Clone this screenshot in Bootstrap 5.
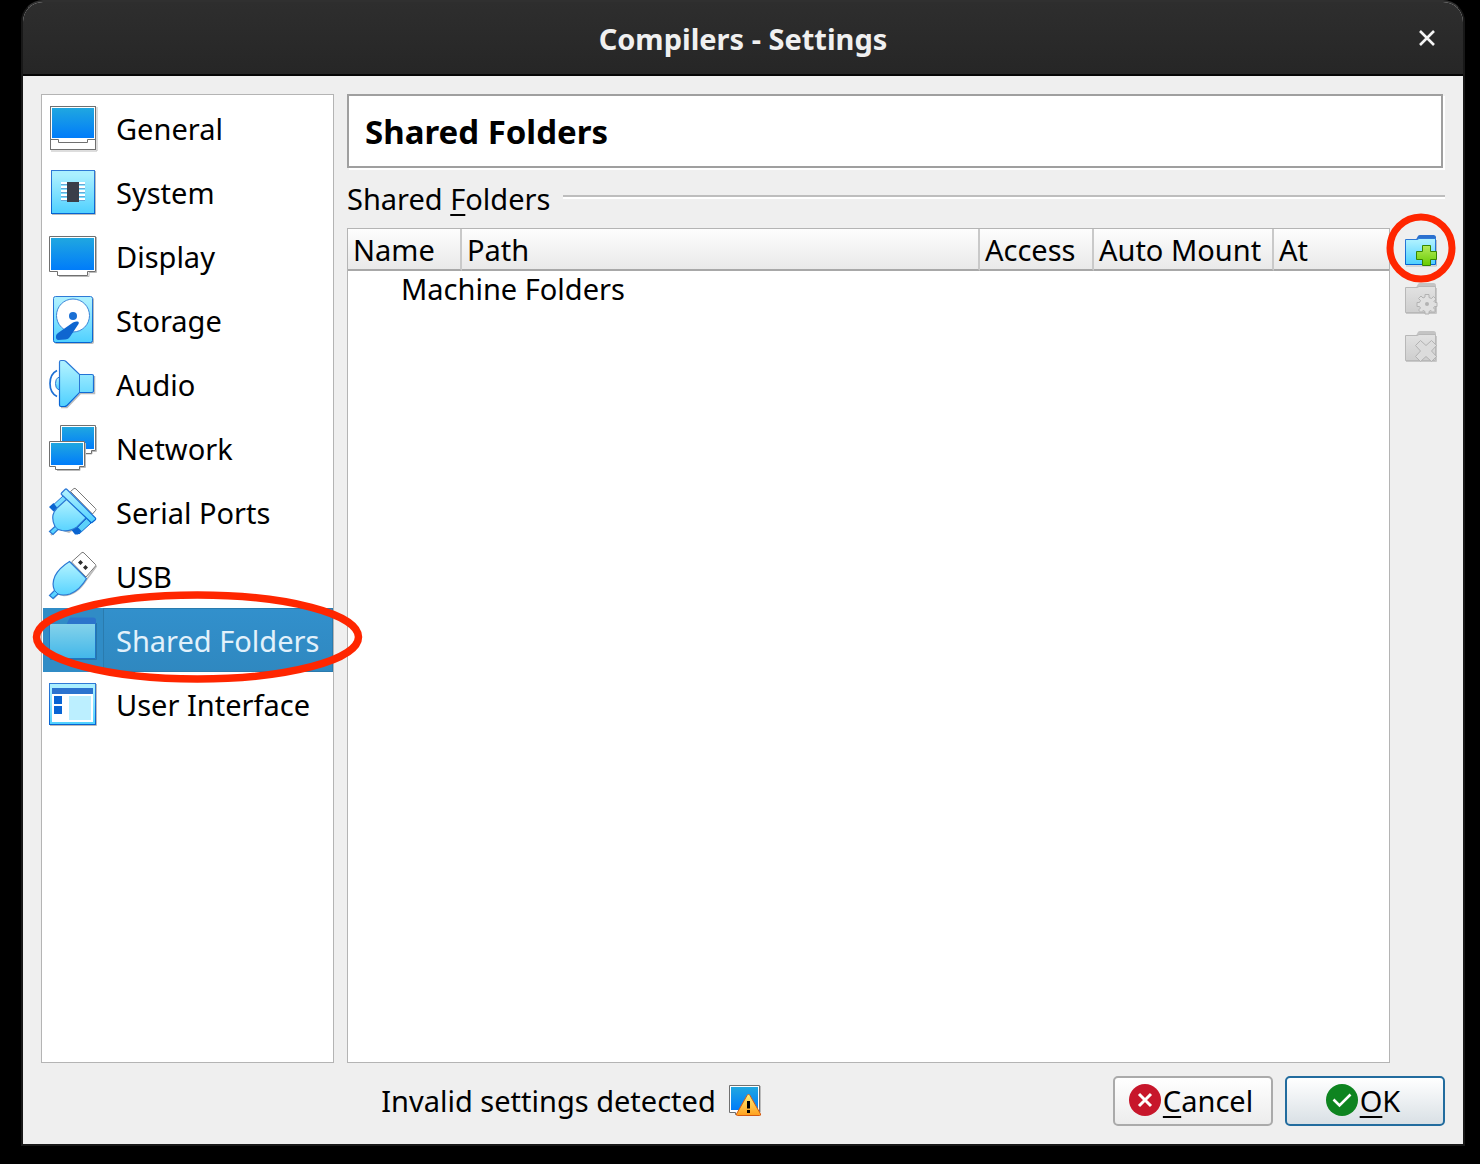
<!DOCTYPE html>
<html lang="en">
<head>
<meta charset="utf-8">
<meta name="viewport" content="width=device-width, initial-scale=1">
<title>Compilers - Settings</title>
<link href="https://cdn.jsdelivr.net/npm/bootstrap@5.3.0/dist/css/bootstrap.min.css" rel="stylesheet">
<style>
  body { background: #000; color: #000; font-family: "Noto Sans", "Open Sans", sans-serif; font-size: 29px; line-height: 38px; }
  .stage { min-height: 100vh; padding: 0 15px 18px 21px; }
  .dialog-window { border: 2px solid #181818; border-top-color: #303030; border-radius: 22px 22px 0 0; background: #efefef; overflow: hidden; }
  .title-bar { height: 74px; background: linear-gradient(#2e2e2e, #262626); border-bottom: 2px solid #050505; color: #f0f0f0; padding: 0 20px; }
  .title-bar h1 { font-size: 29px; line-height: 38px; font-weight: 700; padding-top: 2px; }
  .title-side { width: 32px; height: 32px; }
  .close-btn { background: none; border: 0; padding: 0; }
  .dialog-body { padding: 18px; gap: 13px; }
  .panes { gap: 13px; }
  .category-list { width: 293px; background: #fff; border: 1px solid #b4b4b4; border-radius: 0; padding: 1px 0 0 1px; flex: none; }
  .category { height: 64px; padding: 0 0 0 6px; gap: 6px; color: #000; text-decoration: none; position: relative; }
  .category svg.cat-icon { width: 48px; height: 48px; flex: none; overflow: visible; }
  .category span { flex: 1; height: 64px; line-height: 64px; padding-left: 12px; border: 1px solid transparent; white-space: nowrap; }
  .category.current { background: #308cc6; color: #e2f1fb; z-index: 2; }
  .category.current span { background: linear-gradient(#3290cc, #2f88c0); border-color: #2a7bae; }
  .ring-wide { position: absolute; left: -11px; top: -18px; width: 331px; height: 94px; pointer-events: none; }
  .ring-small { position: absolute; left: -11px; top: -14px; width: 70px; height: 70px; pointer-events: none; z-index: 2; }
  .page-head { height: 74px; margin: 0 2px 2px 0; background: #fff; border: 2px solid #9f9f9f; box-shadow: 2px 2px 0 #fff; padding: 2px 0 0 16px; }
  .page-head h2 { font-size: 33px; line-height: 44px; font-weight: 700; }
  .group-head { height: 58px; gap: 13px; }
  .group-head h3 { font-size: 29px; line-height: 38px; font-weight: 400; }
  .group-rule { height: 4px; background: #bdbdbd; border-bottom: 2px solid #fff; margin-bottom: 4px; }
  .mnemonic { text-decoration: underline; text-decoration-thickness: 2px; text-underline-offset: 4px; text-decoration-skip-ink: none; }
  .folder-pane { gap: 7px; }
  .folder-view { background: #fff; border: 1px solid #b4b4b4; min-width: 0; }
  .folder-table { table-layout: fixed; width: 100%; white-space: nowrap; border-collapse: separate; border-spacing: 0; }
  .folder-table th { height: 42px; padding: 2px 0 0 5px; font-weight: 400; line-height: 38px; background: linear-gradient(#fdfdfd, #e9e9e9); border-bottom: 2px solid #a8a8a8; border-right: 2px solid #c9c9c9; }
  .folder-table th:last-child { border-right: 0; }
  .folder-table td { height: 36px; line-height: 36px; padding: 0 0 0 53px; }
  .col-name, .col-access { width: 114px; }
  .col-auto-mount { width: 180px; }
  .col-at { width: 115px; }
  .tool-strip { flex: none; margin-top: -1px; }
  .tool { width: 48px; height: 48px; padding: 0; border: 0; background: none; position: relative; }
  .tool svg.tool-icon { width: 32px; height: 32px; overflow: visible; }
  .status-line { gap: 13px; }
  .dialog-actions { gap: 12px; margin-left: 12px; }
  .dialog-btn { width: 160px; height: 50px; border: 2px solid #aaa; border-radius: 5px; background: linear-gradient(#fff, #ececec); color: #000; font-size: 29px; line-height: 38px; padding: 0 4px 0 0; gap: 2px; }
  .dialog-btn.default-btn { border-color: #226c9e; background: linear-gradient(#fff, #d9e0e5); }
  .dialog-btn svg { margin-bottom: 2px; }
  svg { display: block; }
</style>
<script src="https://cdn.jsdelivr.net/npm/bootstrap@5.3.0/dist/js/bootstrap.bundle.min.js"></script>
</head>
<body>
<svg width="0" height="0" class="position-absolute" aria-hidden="true">
  <defs>
    <linearGradient id="screen" x1="0" y1="0" x2="0" y2="1"><stop offset="0" stop-color="#20a7e0"/><stop offset="1" stop-color="#007cfa"/></linearGradient>
    <linearGradient id="cyan" x1="0" y1="0" x2="0" y2="1"><stop offset="0.1" stop-color="#abf0ff"/><stop offset="1" stop-color="#4fd0ff"/></linearGradient>
    <linearGradient id="edge" x1="0" y1="0" x2="0" y2="1"><stop offset="0" stop-color="#2f7ad6"/><stop offset="1" stop-color="#0563d2"/></linearGradient>
    <linearGradient id="folderSel" x1="0" y1="0" x2="0" y2="1"><stop offset="0" stop-color="#84d2ea"/><stop offset="1" stop-color="#42b7ea"/></linearGradient>
    <linearGradient id="green" x1="0" y1="0" x2="0" y2="1"><stop offset="0" stop-color="#b4ea5c"/><stop offset="1" stop-color="#67cc00"/></linearGradient>
    <linearGradient id="amber" x1="0" y1="0" x2="0" y2="1"><stop offset="0" stop-color="#fff27c"/><stop offset="1" stop-color="#ff9f1c"/></linearGradient>
    <linearGradient id="grey" x1="0" y1="0" x2="0" y2="1"><stop offset="0" stop-color="#e2e2e2"/><stop offset="1" stop-color="#cecece"/></linearGradient>
  </defs>
</svg>
<div class="stage d-flex">
  <main class="dialog-window d-flex flex-column flex-grow-1">
    <header class="title-bar d-flex align-items-center justify-content-between">
      <div class="title-side"></div>
      <h1 class="m-0">Compilers - Settings</h1>
      <button type="button" class="close-btn title-side" aria-label="Close">
        <svg width="32" height="32" viewBox="0 0 32 32"><path d="M9 9l14 14M23 9L9 23" stroke="#f4f4f4" stroke-width="2.600"/></svg>
      </button>
    </header>

    <div class="dialog-body d-flex flex-column flex-grow-1">
      <div class="panes d-flex flex-grow-1">
        <nav class="category-list d-flex flex-column" aria-label="Settings categories">
          <a href="#" class="category d-flex align-items-center">
            <svg class="cat-icon" viewBox="0 0 48 48"><path d="M2 47H48V3" fill="none" stroke="#bbb"/><rect x="1.500" y="2.500" width="45" height="43" fill="#fff" stroke="#707070"/><rect x="3" y="4" width="42" height="30" fill="url(#screen)"/><path d="M1.500 35.500H9.500V38.500H38.500V35.500H46.500" fill="none" stroke="#707070"/></svg>
            <span>General</span></a>
          <a href="#" class="category d-flex align-items-center">
            <svg class="cat-icon" viewBox="0 0 48 48"><path d="M3 46.500H46.500V3" fill="none" stroke="#bbb"/><rect x="2.500" y="2.500" width="43" height="43" fill="url(#cyan)" stroke="url(#edge)"/><path d="M12 15h24M12 19h24M12 23h24M12 27h24M12 31h24" stroke="#fff" stroke-width="2"/><path d="M12 16.500h24M12 20.500h24M12 24.500h24M12 28.500h24M12 32.500h24" stroke="#65a9d8"/><rect x="18" y="14" width="12" height="20" fill="#3a3e49"/></svg>
            <span>System</span></a>
          <a href="#" class="category d-flex align-items-center">
            <svg class="cat-icon" viewBox="0 0 48 48"><path d="M47.500 5V40.500H40V44.500H10" fill="none" stroke="#bbb"/><path d="M.5 4.500H46.500V39.500H38.500V43.500H8.500V39.500H.5Z" fill="#fff" stroke="#707070"/><rect x="2" y="6" width="43" height="32" fill="url(#screen)"/></svg>
            <span>Display</span></a>
          <a href="#" class="category d-flex align-items-center">
            <svg class="cat-icon" viewBox="0 0 48 48"><rect x="5.500" y="1.500" width="39.500" height="46.500" rx="2" fill="#bbb"/><rect x="4.500" y=".5" width="39" height="46" rx="2" fill="url(#cyan)" stroke="url(#edge)"/><circle cx="24" cy="19.500" r="16.500" fill="#fff" stroke="#3b86d8"/><circle cx="24" cy="20" r="4" fill="#1a6fd4"/><path d="M28.500 25.500Q30.500 26 29.500 28L21.500 40Q19.500 43.500 16 43.500L9 44Q6.500 43.500 7 40Q7 38.500 9 37L24 26.500Q27 25 28.500 25.500Z" fill="#0f66d0"/></svg>
            <span>Storage</span></a>
          <a href="#" class="category d-flex align-items-center">
            <svg class="cat-icon" viewBox="0 0 48 48"><path d="M12 47.500H18L31.500 33.500H45.500V16" fill="none" stroke="#bbb" stroke-width="1.500"/><path d="M8 10.500Q1 14 1 23.500T8 36.500" fill="none" stroke="#1c6fd4" stroke-width="1.700"/><path d="M11 17.500H9Q6.500 19 6.500 23.500T9 29.500H11" fill="url(#cyan)" stroke="#2a78d4"/><path d="M10.500 2Q10.500.5 12 .5H14.500Q16 .5 17 1.500L30.500 14.500H43Q44.500 14.500 44.500 16V31Q44.500 32.500 43 32.500H30.500L18 45.500Q17 46.500 15.500 46.500H12Q10.500 46.500 10.500 45Z" fill="url(#cyan)" stroke="url(#edge)" stroke-width="1.200"/><path d="M30.500 14.500V32.500" stroke="#2a78d4"/></svg>
            <span>Audio</span></a>
          <a href="#" class="category d-flex align-items-center">
            <svg class="cat-icon" viewBox="0 0 48 48"><path d="M47.500 3V27.500H43V30H30" fill="none" stroke="#bbb"/><path d="M11.500 1.500H46.500V26.500H42.500V29.500H17.500V26.500H11.500Z" fill="#fff" stroke="#707070"/><rect x="13" y="3" width="32" height="22" fill="url(#screen)"/><path d="M36.500 19V43.500H31V46.500H8" fill="none" stroke="#bbb"/><path d="M.5 17.500H35.500V42.500H30.500V45.500H6.500V42.500H.5Z" fill="#fff" stroke="#707070"/><rect x="2" y="19" width="32" height="22" fill="url(#screen)"/></svg>
            <span>Network</span></a>
          <a href="#" class="category d-flex align-items-center">
            <svg class="cat-icon" viewBox="0 0 48 48"><path d="M21.500 3.500L25 .5Q26 0 27 1L46.500 20.500Q47.500 21.500 46.500 22.500L43.500 26Z" fill="#fff" stroke="#777"/><path d="M2 47L8 40L20 44L29 38" fill="none" stroke="#bbb" stroke-width="2"/><path d="M14 8L2 19L6 23L19 13Z" fill="#79dcff" stroke="#2a78d4"/><path d="M0 19L4.500 15L8.500 20L4.500 23.500Z" fill="#0a64d0"/><path d="M38 30L26 42L30 46L42 35Z" fill="#5bd0fa" stroke="#0f68d0"/><path d="M22.500 42L28 38.500L32.500 43L29 46.500H26Z" fill="#0a64d0"/><path d="M.5 43.500L6 38.500Q3 33 4 27Q5 23 8 20L19 10L38 29L28 39Q20 44 13 42.500L9 41.500L4 46.500Z" fill="url(#cyan)" stroke="#2a78d4" stroke-width="1.200"/><path d="M6 38.500L9 41.500" stroke="#2a78d4"/><path d="M12.500 5L16 1.500Q17 .5 18 1.500L46.500 30Q47 31 46 32L43 34.500Q42.500 35 41.500 34L12.500 6.500Q12 6 12.500 5Z" fill="url(#cyan)" stroke="url(#edge)" stroke-width="1.200"/></svg>
            <span>Serial Ports</span></a>
          <a href="#" class="category d-flex align-items-center">
            <svg class="cat-icon" viewBox="0 0 48 48"><path d="M47.500 14L38 27Q28 43 15 43.500L9 42L4 47" fill="none" stroke="#bbb" stroke-width="1.500"/><path d="M22.500 10L33 .5Q34 0 35 1L46.500 12.500Q47 13.500 46.500 14L37 25Z" fill="#fff" stroke="#777"/><path d="M31.500 8l2.500 2.500-2.500 2.500L29 10.500ZM36.500 13l2.500 2.500-2.500 2.500L34 15.500Z" fill="#2c2c2c"/><path d="M20.500 9.500L37.500 26.500Q31 38 21 42Q14 44 9 42L4 46.500L.5 43.500L5.500 38.500Q2.500 32 6 24Q10 16 20.500 9.500Z" fill="url(#cyan)" stroke="#2a78d4" stroke-width="1.200"/><path d="M5.500 38.500L9 42" stroke="#2a78d4"/></svg>
            <span>USB</span></a>
          <a href="#" class="category current d-flex align-items-center" aria-current="page">
            <svg class="cat-icon" viewBox="0 0 48 48"><path d="M1 43.500H47.500V7" fill="none" stroke="#2877aa"/><path d="M17.500 8.500L20 3Q20.500 1.500 22 1.500H44Q47 1.500 47 4V10H17Z" fill="#2c74cb"/><rect x=".5" y="8" width="46" height="34.500" fill="url(#folderSel)"/><path d="M.5 8V42.500H46.500V8" fill="none" stroke="#1f76c4"/></svg>
            <span>Shared Folders</span>
            <svg class="ring-wide" viewBox="0 0 331 94" aria-hidden="true"><ellipse cx="165.500" cy="47" rx="161" ry="42" fill="none" stroke="#ff2600" stroke-width="7.500"/></svg></a>
          <a href="#" class="category d-flex align-items-center">
            <svg class="cat-icon" viewBox="0 0 48 48"><path d="M1 45.500H47.500V4" fill="none" stroke="#bbb"/><rect x=".5" y="3.500" width="46" height="41" fill="url(#cyan)" stroke="url(#edge)"/><rect x="3" y="14" width="41" height="28" fill="#fff"/><rect x="3" y="8" width="41" height="6" fill="#2b73cf"/><path d="M5 16h8v8H5zM5 26h8v8H5z" fill="#0864d4"/><rect x="20" y="16" width="22" height="24" fill="#bcefff"/></svg>
            <span>User Interface</span></a>
        </nav>

        <section class="d-flex flex-column flex-grow-1">
          <div class="page-head d-flex align-items-center"><h2 class="m-0">Shared Folders</h2></div>
          <div class="group-head d-flex align-items-center">
            <h3 class="m-0">Shared <span class="mnemonic">F</span>olders</h3>
            <div class="group-rule flex-grow-1"></div>
          </div>
          <div class="folder-pane d-flex flex-grow-1">
            <div class="folder-view flex-grow-1">
              <table class="folder-table">
                <colgroup><col class="col-name"><col><col class="col-access"><col class="col-auto-mount"><col class="col-at"></colgroup>
                <thead><tr><th scope="col">Name</th><th scope="col">Path</th><th scope="col">Access</th><th scope="col">Auto Mount</th><th scope="col">At</th></tr></thead>
                <tbody><tr><td colspan="5">Machine Folders</td></tr></tbody>
              </table>
            </div>
            <div class="tool-strip d-flex flex-column">
              <button type="button" class="tool d-flex align-items-center justify-content-center" aria-label="Add shared folder">
                <svg class="tool-icon" viewBox="0 0 32 32"><path d="M1 31H31.500V5" fill="none" stroke="#bbb"/><path d="M11 4.500L13 1Q13.500 0 15 0H28.500Q31 0 31 2.500V6H11Z" fill="#2b70cf"/><path d="M.5 4.500H12L14 3.500H30.500V29.500H.5Z" fill="url(#cyan)" stroke="url(#edge)"/><path d="M17.500 10.500H25.500V16.500H31.500V24.500H25.500V30.500H17.500V24.500H11.500V16.500H17.500Z" fill="url(#green)" stroke="#378600"/></svg>
                <svg class="ring-small" viewBox="0 0 70 70" aria-hidden="true"><circle cx="35" cy="35" r="31" fill="none" stroke="#ff2600" stroke-width="7"/></svg>
              </button>
              <button type="button" class="tool d-flex align-items-center justify-content-center" aria-label="Edit shared folder" disabled>
                <svg class="tool-icon" viewBox="0 0 32 32"><path d="M11 4.500L13 1Q13.500 0 15 0H28.500Q31 0 31 2.500V6H11Z" fill="#c4c4c4"/><path d="M1 30.500H31.500V5" fill="none" stroke="#c8c8c8"/><path d="M.5 4.500H12L14 3.500H30.500V29.500H.5Z" fill="url(#grey)" stroke="#b8b8b8"/><path d="M20 11.500h4v3l2.500 1 2-2 2.500 2.500-2 2.500 1 1h2v4h-2.500l-1 1.500 2 2-2.500 2.500-2-2-2 1v2.500h-4v-2.500l-2-1-2 2-2.500-2.500 2-2-1-1.500h-2.500v-4h2.500l1-2-2-2 2.500-2.500 2 2 2-1Z" fill="#e0e0e0" stroke="#b2b2b2"/><circle cx="22" cy="21" r="2" fill="#b2b2b2"/></svg>
              </button>
              <button type="button" class="tool d-flex align-items-center justify-content-center" aria-label="Remove shared folder" disabled>
                <svg class="tool-icon" viewBox="0 0 32 32"><path d="M11 4.500L13 1Q13.500 0 15 0H28.500Q31 0 31 2.500V6H11Z" fill="#c4c4c4"/><path d="M1 30.500H31.500V5" fill="none" stroke="#c8c8c8"/><path d="M.5 4.500H12L14 3.500H30.500V29.500H.5Z" fill="url(#grey)" stroke="#b8b8b8"/><path d="M15.500 9.500L21 14.500L26.500 9.500L31.500 14.500L26.500 20L31.500 25.500L26.500 30.500L21 25.500L15.500 30.500L10.500 25.500L15.500 20L10.500 14.500Z" fill="#dcdcdc" stroke="#b2b2b2"/></svg>
              </button>
            </div>
          </div>
        </section>
      </div>

      <footer class="d-flex align-items-center">
        <div class="status-line d-flex align-items-center justify-content-center flex-grow-1" role="status">
          <span>Invalid settings detected</span>
          <svg width="32" height="32" viewBox="0 0 32 32"><path d="M31.500 1V27H6" fill="none" stroke="#bbb"/><path d="M.5.5H30.500V27.500H25V29.500H6.500V27.500H.5Z" fill="#fff" stroke="#707070"/><rect x="2" y="2" width="27" height="23" fill="url(#screen)"/><path d="M18 10.500Q19.500 7.500 21 10.500L31.500 29Q32 30.500 30.500 30.500H8.500Q7 30.500 7.500 29Z" fill="url(#amber)" stroke="#d35a14"/><path d="M18 16h3v7.500h-3zM18 25h3v3h-3z" fill="#000"/></svg>
        </div>
        <div class="dialog-actions d-flex">
          <button type="button" class="dialog-btn d-flex align-items-center justify-content-center">
            <svg width="32" height="32" viewBox="0 0 32 32"><circle cx="16" cy="16" r="16" fill="#c7162b"/><path d="M10 10l12 12M22 10L10 22" stroke="#fff" stroke-width="3"/></svg>
            <span><span class="mnemonic">C</span>ancel</span>
          </button>
          <button type="button" class="dialog-btn default-btn d-flex align-items-center justify-content-center">
            <svg width="32" height="32" viewBox="0 0 32 32"><circle cx="16" cy="16" r="16" fill="#0e8420"/><path d="M7.500 15.500L13.500 21.500L24.500 10.500" fill="none" stroke="#fff" stroke-width="2.600"/></svg>
            <span><span class="mnemonic">O</span>K</span>
          </button>
        </div>
      </footer>
    </div>
  </main>
</div>
</body>
</html>
